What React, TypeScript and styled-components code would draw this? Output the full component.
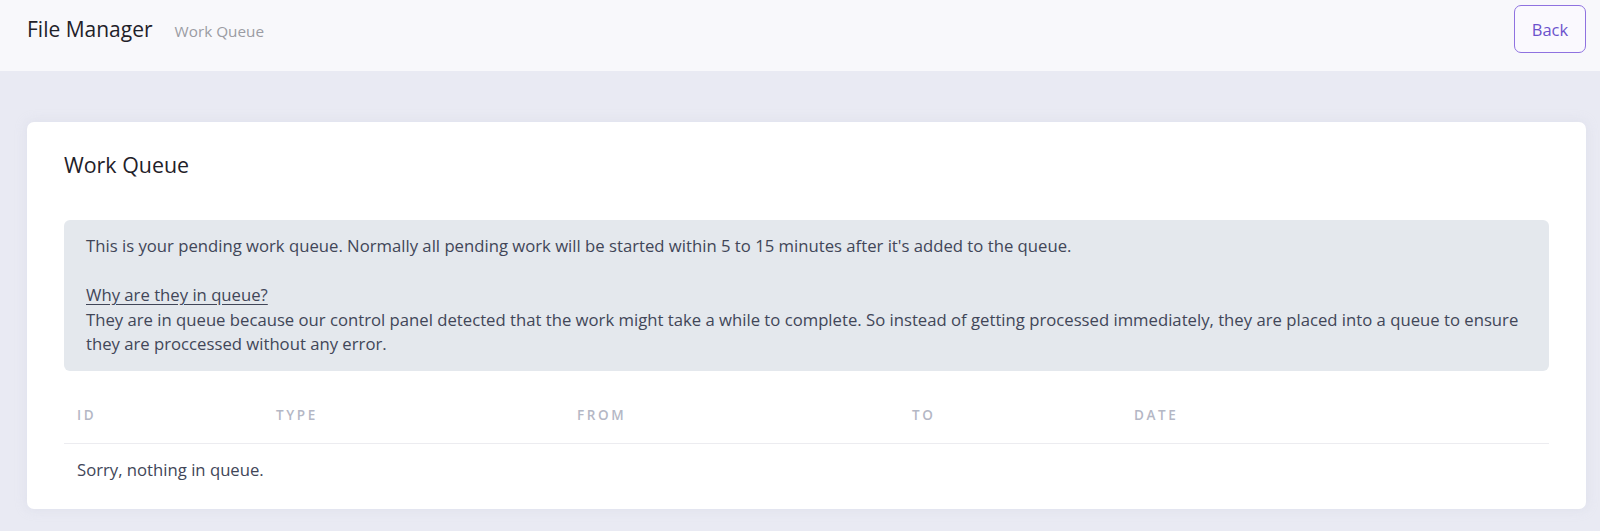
import React from "react";
import styled, { createGlobalStyle } from "styled-components";

const GlobalStyle = createGlobalStyle`
  html, body {
    margin: 0;
    padding: 0;
    background: #e9eaf3;
    font-family: "Open Sans", "Noto Sans", sans-serif;
  }
  * { box-sizing: border-box; }
`;

type Column = { key: string; label: string; width: number };

const columns: Column[] = [
  { key: "id", label: "ID", width: 199 },
  { key: "type", label: "TYPE", width: 301 },
  { key: "from", label: "FROM", width: 335 },
  { key: "to", label: "TO", width: 222 },
  { key: "date", label: "DATE", width: 428 },
];

const App = () => {
  return <Page>
    <GlobalStyle />
    <Header>
      <TitleWrapper>
        <AppTitle>File Manager</AppTitle>
        <Crumb>Work Queue</Crumb>
      </TitleWrapper>
      <BackButton>Back</BackButton>
    </Header>

    <Content>
      <Card>
        <CardTitle>Work Queue</CardTitle>
        <Notice>
          This is your pending work queue. Normally all pending work will be started within 5 to 15 minutes after it's added to the queue.
          <br />
          <br />
          <u>Why are they in queue?</u>
          <br />
          They are in queue because our control panel detected that the work might take a while to complete. So instead of getting processed immediately, they are placed into a queue to ensure they are proccessed without any error.
        </Notice>
        <Table>
          <colgroup>
            {columns.map(c => <col key={c.key} style={{ width: c.width }} />)}
          </colgroup>
          <thead>
            <tr>
              {columns.map(c => <Th key={c.key}>{c.label}</Th>)}
            </tr>
          </thead>
          <tbody>
            <tr>
              <Td colSpan={columns.length}>Sorry, nothing in queue.</Td>
            </tr>
          </tbody>
        </Table>
      </Card>
    </Content>
  </Page>
}

export default App;

const Page = styled.div`
  min-height: 531px;
  background: #e9eaf3;
`

const Header = styled.header`
  display: flex;
  justify-content: space-between;
  align-items: flex-start;
  height: 71px;
  padding: 5px 14px 0 27px;
  background: #f8f8fb;
`

const TitleWrapper = styled.div`
  display: flex;
  align-items: baseline;
  gap: 22px;
  height: 48px;
  padding-top: 10px;
`

const AppTitle = styled.span`
  color: #1f2129;
  font-size: 21px;
  line-height: 28px;
`

const Crumb = styled.span`
  color: #9b9ca3;
  font-size: 15.3px;
`

const BackButton = styled.button`
  width: 72px;
  height: 48px;
  border: 1px solid #8f72e0;
  border-radius: 7px;
  background: #faf9fe;
  color: #6b52cc;
  font-family: inherit;
  font-size: 16.5px;
  cursor: pointer;
`

const Content = styled.main`
  padding: 51px 14px 24px 27px;
`

const Card = styled.section`
  padding: 30px 37px 13px;
  border-radius: 7px;
  background: #ffffff;
  box-shadow: 0 0 12px rgba(200, 202, 220, 0.35);
`

const CardTitle = styled.h2`
  margin: 0 0 42px;
  color: #1f2129;
  font-size: 21.4px;
  font-weight: 400;
  line-height: 26px;
`

const Notice = styled.div`
  padding: 14px 22px 14px;
  border-radius: 6px;
  background: #e4e8ed;
  color: #414658;
  font-size: 16.7px;
  line-height: 24.5px;

  u {
    text-underline-offset: 3px;
  }
`

const Table = styled.table`
  width: 100%;
  margin-top: 16px;
  border-collapse: collapse;
  table-layout: fixed;
`

const Th = styled.th`
  padding: 18px 13px;
  border-bottom: 1px solid #ececf0;
  color: #b4b7c5;
  font-size: 13.5px;
  font-weight: 600;
  letter-spacing: 2.6px;
  line-height: 20px;
  text-align: left;
`

const Td = styled.td`
  padding: 14px 13px;
  color: #414658;
  font-size: 16.7px;
  line-height: 24px;
`
